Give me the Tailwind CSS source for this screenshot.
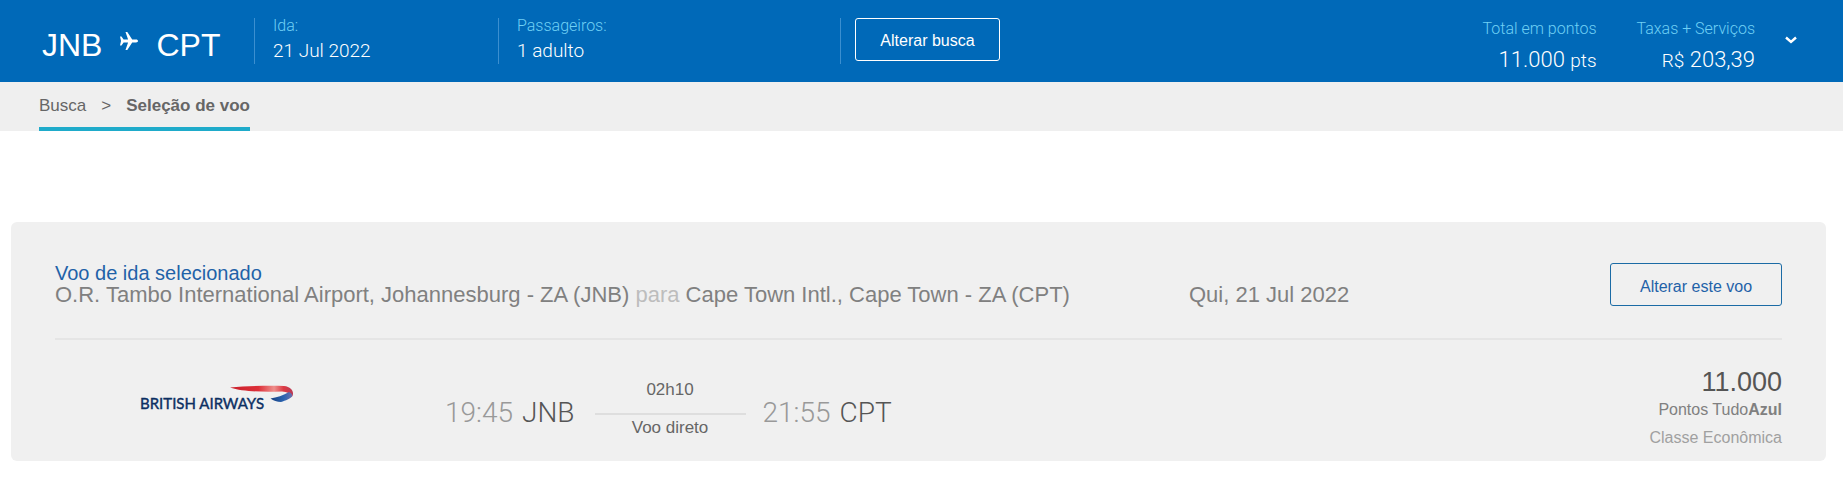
<!DOCTYPE html>
<html lang="pt-BR">
  <head>
    <meta charset="UTF-8" />
    <meta name="viewport" content="width=device-width, initial-scale=1.0" />
    <title>Seleção de voo</title>
    <script src="https://cdn.jsdelivr.net/npm/@tailwindcss/browser@4"></script>
  </head>

  <body class="bg-white font-['Liberation_Sans',Arial,sans-serif] text-[#666]">
    <!-- Search summary -->
    <header class="flex h-[82px] bg-[#0069b8] pl-[42px] pr-[46px] font-['Roboto',sans-serif] font-light text-white">
      <div class="flex w-[212px] shrink-0 items-center gap-[17px] pt-2 font-['Liberation_Sans',Arial,sans-serif] text-[32px]">
        <span>JNB</span>
        <svg class="mb-2 h-5 w-5 shrink-0" viewBox="0 0 20 20" fill="#fff" aria-hidden="true">
          <path d="M1 5.600h1.500l2.100 3h4.500L6.500 1h1.800l4.900 7.600H17c1.300 0 2 .7 2 1.400s-.7 1.400-2 1.400h-3.800L8.300 19H6.500l2.600-7.600H4.600l-2.100 3H1L2 10z" />
        </svg>
        <span>CPT</span>
      </div>

      <dl class="my-[18px] w-[244px] shrink-0 border-l border-[#3b8fd0] pl-[18px]">
        <dt class="-mt-1 text-base text-[#6fd0f5]">Ida:</dt>
        <dd class="text-[19px] leading-[26px]">21 Jul 2022</dd>
      </dl>
      <dl class="my-[18px] w-[342px] shrink-0 border-l border-[#3b8fd0] pl-[18px]">
        <dt class="-mt-1 text-base text-[#6fd0f5]">Passageiros:</dt>
        <dd class="text-[19px] leading-[26px]">1 adulto</dd>
      </dl>
      <div class="my-[18px] border-l border-[#3b8fd0] pl-[14px]">
        <button
          type="button"
          class="h-[43px] w-[145px] rounded-[3px] border border-white pt-0.5 font-['Liberation_Sans',Arial,sans-serif] text-base font-normal"
        >
          Alterar busca
        </button>
      </div>

      <div class="ml-auto flex gap-10 pt-[17px] text-right">
        <dl>
          <dt class="text-base text-[#6fd0f5]">Total em pontos</dt>
          <dd class="pt-[3px] text-[22px] leading-8">11.000 <span class="text-[19px]">pts</span></dd>
        </dl>
        <dl>
          <dt class="text-base text-[#6fd0f5]">Taxas + Serviços</dt>
          <dd class="pt-[3px] text-[22px] leading-8"><span class="text-[19px]">R$</span> 203,39</dd>
        </dl>
      </div>
      <button type="button" class="ml-[30px] flex items-center pb-[2px]" aria-label="Ver detalhes">
        <svg class="h-3 w-3" viewBox="0 0 12 12" fill="none" stroke="#fff" stroke-width="2.400" aria-hidden="true">
          <path d="M1 3.500l5 4.500 5-4.500" />
        </svg>
      </button>
    </header>

    <!-- Breadcrumb -->
    <nav class="flex h-[49px] bg-[#efefef] px-[39px] text-[17px]">
      <ol class="flex gap-[15px] border-b-4 border-[#1fabca] pt-[11px]">
        <li><a href="#">Busca</a></li>
        <li aria-hidden="true">&gt;</li>
        <li class="font-bold" aria-current="page">Seleção de voo</li>
      </ol>
    </nav>

    <!-- Selected flight -->
    <main class="ml-[11px] mr-[17px] mt-[91px] rounded-md bg-[#f0f0f0] px-11">
      <div class="flex justify-between border-b-2 border-[#e5e5e5] pb-[31px] pt-[41px] text-[22px] leading-6 text-[#808080]">
        <div class="w-[1134px] shrink-0">
          <h1 class="text-[20px] leading-[20px] text-[#1f62a8]">Voo de ida selecionado</h1>
          <p>
            O.R. Tambo International Airport, Johannesburg - ZA (JNB)
            <span class="text-[#bdbdbd]">para</span> Cape Town Intl., Cape Town - ZA (CPT)
          </p>
        </div>
        <p class="flex-1 pt-5">Qui, 21 Jul 2022</p>
        <button type="button" class="h-[43px] w-[172px] rounded-[3px] border border-[#1b6ba5] pt-1 text-base text-[#1f62a8]">
          Alterar este voo
        </button>
      </div>

      <div class="flex h-[121px] pt-[26px]">
        <svg class="ml-[84px] mt-[18px] h-7 w-40 shrink-0" viewBox="0 0 160 28" role="img" aria-label="British Airways">
          <defs>
            <linearGradient id="ribbon">
              <stop offset="0" stop-color="#c9202c" />
              <stop offset=".45" stop-color="#dd2f38" />
              <stop offset=".7" stop-color="#ee8f8c" />
              <stop offset=".85" stop-color="#dc3a44" />
              <stop offset="1" stop-color="#b83a55" />
            </linearGradient>
            <linearGradient id="ribbonTail">
              <stop offset="0" stop-color="#153f80" />
              <stop offset=".6" stop-color="#2a63b0" />
              <stop offset="1" stop-color="#6a6fae" />
            </linearGradient>
          </defs>
          <text x="1" y="25" fill="#0c2f63" stroke="#0c2f63" stroke-width=".4" class="font-['Lato',sans-serif] text-[15px]">BRITISH AIRWAYS</text>
          <path fill="url(#ribbon)" d="M91 3.500C108 2 130 1.500 145 2c6 .5 9 4 9 7.500 0 2-.6 3-1.500 3.500-1-3.500-4.500-5.300-9.500-5.500C126 8 104 8 91 3.500z" />
          <path fill="url(#ribbonTail)" d="M131.500 14.500c6-.8 13-3.200 18.500-6.500 2.500 1.200 3.700 2.500 3 4.500-1.500 2-6.300 4-11 5.500-4 0-7.500-1.200-10.500-3.500z" />
        </svg>

        <div class="ml-[146px] flex h-20 text-[28px] font-light">
          <p class="flex gap-[9px] pt-[31px] leading-8 text-[#555] font-['Roboto',sans-serif]"><time class="text-[#999]">19:45</time>JNB</p>
          <div class="ml-5 mr-[17px] w-[151px] text-center text-[17px] font-normal">
            <p class="border-b-2 border-[#dedede] pb-[11px] pt-3 leading-6">02h10</p>
            <p class="pt-px leading-6">Voo direto</p>
          </div>
          <p class="flex gap-[9px] pt-[31px] leading-8 text-[#555] font-['Roboto',sans-serif]"><time class="text-[#999]">21:55</time>CPT</p>
        </div>

        <div class="ml-auto text-right text-base text-[#808080]">
          <p class="text-[27px] leading-8 text-[#555]">11.000</p>
          <p class="leading-6">Pontos Tudo<strong>Azul</strong></p>
          <p class="pt-1 text-[#a0a0a0]">Classe Econômica</p>
        </div>
      </div>
    </main>
  </body>
</html>
